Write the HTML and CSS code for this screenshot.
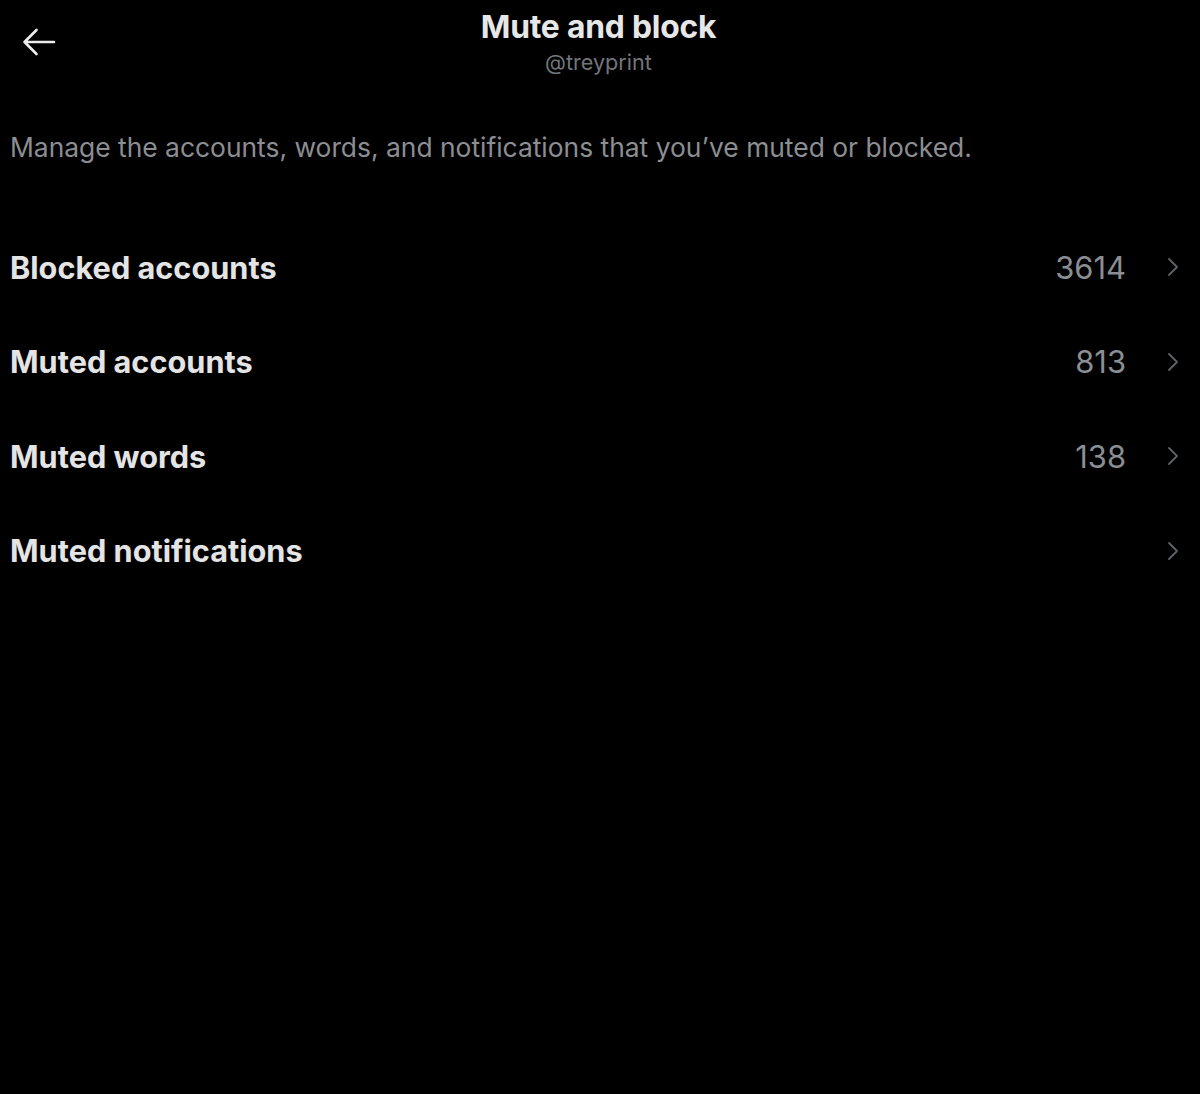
FILE: index.html
```html
<!DOCTYPE html>
<html lang="en">
<head>
<meta charset="utf-8">
<title>Mute and block</title>
<link rel="stylesheet" href="styles.css">
</head>
<body>
<div class="page">
  <header class="header">
    <button class="back" aria-label="Back">
      <svg viewBox="0 0 34 28" width="34" height="28"><path d="M32 14H2.5M14.5 2L2.5 14l12 12" fill="none" stroke="#ececec" stroke-width="2.6" stroke-linecap="round" stroke-linejoin="round"/></svg>
    </button>
    <div class="titles">
      <div class="title">Mute and block</div>
      <div class="handle">@treyprint</div>
    </div>
  </header>
  <p class="desc">Manage the accounts, words, and notifications that you’ve muted or blocked.</p>
  <ul class="list">
    <li class="row"><span class="label">Blocked accounts</span><span class="count">3614</span><svg class="chev" viewBox="0 0 12 20" width="12" height="20"><path d="M2 2l8 8-8 8" fill="none" stroke="#5f6367" stroke-width="1.8" stroke-linecap="round" stroke-linejoin="round"/></svg></li>
    <li class="row"><span class="label">Muted accounts</span><span class="count">813</span><svg class="chev" viewBox="0 0 12 20" width="12" height="20"><path d="M2 2l8 8-8 8" fill="none" stroke="#5f6367" stroke-width="1.8" stroke-linecap="round" stroke-linejoin="round"/></svg></li>
    <li class="row"><span class="label">Muted words</span><span class="count">138</span><svg class="chev" viewBox="0 0 12 20" width="12" height="20"><path d="M2 2l8 8-8 8" fill="none" stroke="#5f6367" stroke-width="1.8" stroke-linecap="round" stroke-linejoin="round"/></svg></li>
    <li class="row"><span class="label">Muted notifications</span><span class="count"></span><svg class="chev" viewBox="0 0 12 20" width="12" height="20"><path d="M2 2l8 8-8 8" fill="none" stroke="#5f6367" stroke-width="1.8" stroke-linecap="round" stroke-linejoin="round"/></svg></li>
  </ul>
</div>
</body>
</html>
```
FILE: styles.css
```css
html, body {
  margin: 0;
  padding: 0;
  background: #000;
}
body {
  font-family: Inter, "Noto Sans", "Liberation Sans", sans-serif;
  color: #e7e9ea;
  height: 1094px;
}
.page {
  padding: 0 21px 0 10px;
}
.header {
  position: relative;
  height: 88px;
  display: flex;
  justify-content: center;
}
.back {
  position: absolute;
  left: 12px;
  top: 28px;
  background: none;
  border: 0;
  padding: 0;
  width: 34px;
  height: 28px;
  display: block;
}
.back svg {
  display: block;
}
.titles {
  display: flex;
  flex-direction: column;
  align-items: center;
  padding-top: 7px;
  margin-left: 8px;
}
.title {
  font-size: 31.8px;
  font-weight: 700;
  line-height: 40px;
  color: #e7e7e7;
  letter-spacing: -0.2px;
}
.handle {
  font-size: 21.6px;
  line-height: 30px;
  color: #71767b;
}
.desc {
  margin: 39px 0 0;
  font-size: 26.4px;
  line-height: 40px;
  color: #8b8e92;
}
.list {
  list-style: none;
  margin: 53px 0 0;
  padding: 0;
}
.row {
  display: flex;
  align-items: center;
  height: 94.5px;
}
.label {
  flex: 1;
  font-size: 30.7px;
  font-weight: 700;
  color: #e4e4e4;
}
.count {
  font-size: 30.9px;
  color: #8b8e92;
  margin-right: 41px;
}
.chev {
  flex: none;
}
```
